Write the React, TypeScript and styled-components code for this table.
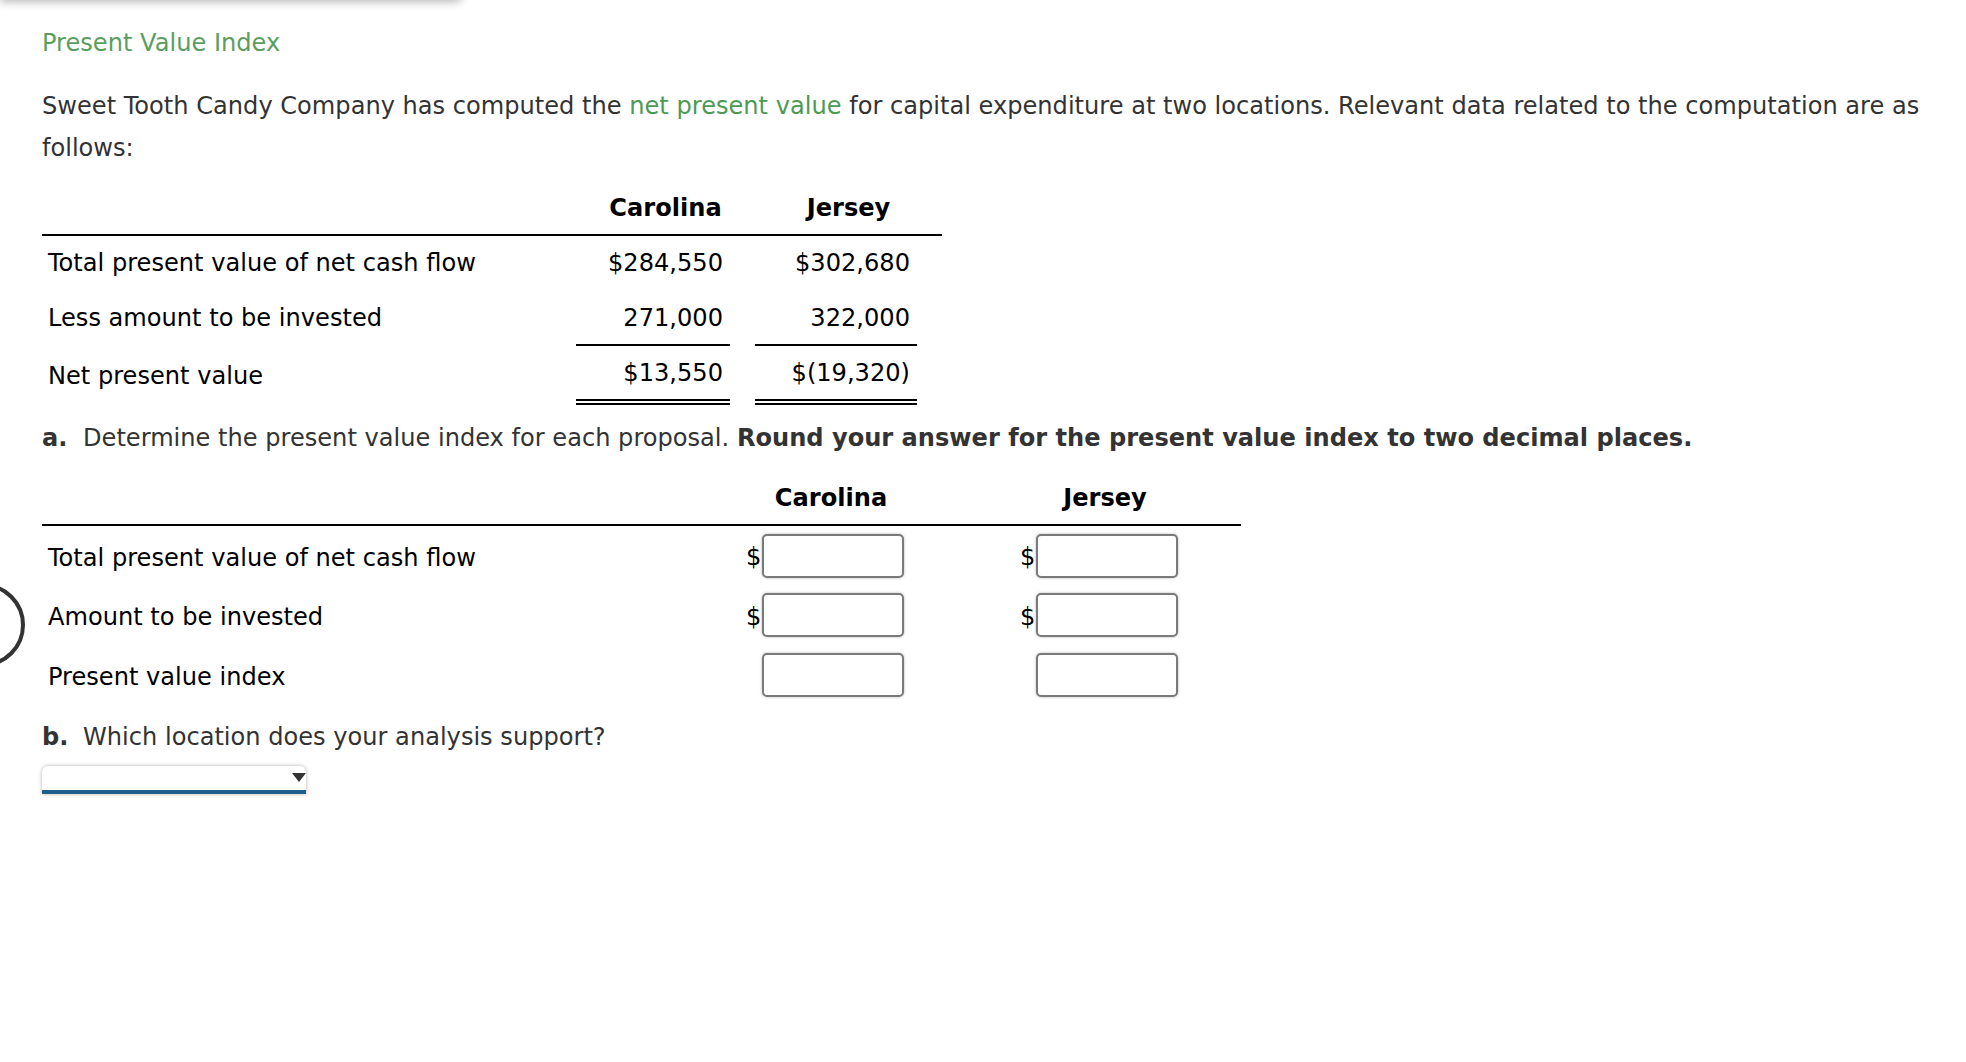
import styled, { createGlobalStyle } from 'styled-components';

type Amounts = { carolina: string; jersey: string; line?: 'single' | 'double' };

const givenRows: ({ label: string } & Amounts)[] = [
  { label: 'Total present value of net cash flow', carolina: '$284,550', jersey: '$302,680' },
  { label: 'Less amount to be invested', carolina: '271,000', jersey: '322,000', line: 'single' },
  { label: 'Net present value', carolina: '$13,550', jersey: '$(19,320)', line: 'double' },
];

const answerRows = [
  { label: 'Total present value of net cash flow', dollar: true },
  { label: 'Amount to be invested', dollar: true },
  { label: 'Present value index', dollar: false },
];

const App: React.FC = () => {
  return (
    <>
      <GlobalStyle />
      <Page>
        <TopShadow />
        <RoundButton />

        <Title>Present Value Index</Title>
        <Intro>
          Sweet Tooth Candy Company has computed the <Term>net present value</Term> for capital
          expenditure at two locations. Relevant data related to the computation are as follows:
        </Intro>

        {/* Given data */}
        <GivenTable>
          <HeadCell />
          <HeadCell>Carolina</HeadCell>
          <HeadCell>Jersey</HeadCell>
          {givenRows.map((row) => (
            <GivenRow key={row.label}>
              <LabelCell $last={row.line === 'double'}>{row.label}</LabelCell>
              <ValueCell>
                <Amount $line={row.line}>{row.carolina}</Amount>
              </ValueCell>
              <ValueCell>
                <Amount $line={row.line}>{row.jersey}</Amount>
              </ValueCell>
            </GivenRow>
          ))}
        </GivenTable>

        <Question>
          <Letter>a.</Letter>Determine the present value index for each proposal.{' '}
          <strong>Round your answer for the present value index to two decimal places.</strong>
        </Question>

        {/* Answer grid */}
        <AnswerTable>
          <AnswerHead>
            <span />
            <HeadText>Carolina</HeadText>
            <HeadText>Jersey</HeadText>
          </AnswerHead>
          {answerRows.map((row) => (
            <AnswerRow key={row.label}>
              <AnswerLabel>{row.label}</AnswerLabel>
              <InputCell>
                <Dollar>{row.dollar ? '$' : ''}</Dollar>
                <Field type="text" aria-label={`${row.label} Carolina`} />
              </InputCell>
              <InputCell>
                <Dollar>{row.dollar ? '$' : ''}</Dollar>
                <Field type="text" aria-label={`${row.label} Jersey`} />
              </InputCell>
            </AnswerRow>
          ))}
        </AnswerTable>

        <QuestionB>
          <Letter>b.</Letter>Which location does your analysis support?
        </QuestionB>
        <Select>
          <Caret />
        </Select>
      </Page>
    </>
  );
};

// Styles
const GlobalStyle = createGlobalStyle`
  body {
    margin: 0;
    background: #fff;
    font-family: "DejaVu Sans", Verdana, sans-serif;
  }
`;

const Page = styled.div`
  position: relative;
  box-sizing: border-box;
  min-height: 1062px;
  padding: 22px 30px 40px 42px;
  overflow: hidden;
  font-size: 24.1px;
  line-height: 42px;
  color: #333;
`;

const TopShadow = styled.div`
  position: absolute;
  top: -40px;
  left: 0;
  width: 462px;
  height: 40px;
  background: #fff;
  border-radius: 0 0 6px 0;
  box-shadow: 0 2px 9px rgba(0, 0, 0, 0.28);
`;

const RoundButton = styled.div`
  position: fixed;
  left: -59px;
  top: 583px;
  width: 84px;
  height: 84px;
  box-sizing: border-box;
  border: 4px solid #333;
  border-radius: 50%;
`;

const Title = styled.h1`
  margin: 0;
  font-size: inherit;
  font-weight: normal;
  color: #5a9e5f;
`;

const Intro = styled.p`
  margin: 21px 0 0;
`;

const Term = styled.span`
  color: #4d9a55;
`;

const GivenTable = styled.div`
  display: grid;
  grid-template-columns: 534px 179px 187px;
  width: 900px;
  margin-top: 18px;
  color: #000;
`;

const GivenRow = styled.div`
  display: contents;
`;

const HeadCell = styled.div`
  padding-bottom: 5px;
  border-bottom: 2px solid #000;
  font-weight: bold;
  text-align: center;
`;

const LabelCell = styled.div<{ $last?: boolean }>`
  padding: ${({ $last }) => ($last ? '9px' : '6px')} 0 0 6px;
`;

const ValueCell = styled.div`
  padding: 6px 25px 0 0;
`;

const Amount = styled.div<{ $line?: 'single' | 'double' }>`
  padding: 0 7px 5px 0;
  text-align: right;
  border-bottom: ${({ $line }) =>
    $line === 'double' ? '6px double #000' : $line === 'single' ? '2px solid #000' : '2px solid transparent'};
`;

const Question = styled.p`
  margin: 12px 0 0;
`;

const QuestionB = styled(Question)`
  margin-top: 11px;
`;

const Letter = styled.b`
  display: inline-block;
  width: 41px;
`;

const AnswerTable = styled.div`
  width: 1199px;
  margin-top: 18px;
  color: #000;
`;

const AnswerRow = styled.div`
  display: grid;
  grid-template-columns: 606px 182px 182px;
  column-gap: 92px;
  align-items: center;
  height: 59.5px;
  box-sizing: border-box;
  padding: 0 45px 0 0;
`;

const AnswerHead = styled(AnswerRow)`
  height: auto;
  padding: 0 45px 5px 0;
  border-bottom: 2px solid #000;
`;

const HeadText = styled.div`
  font-weight: bold;
  text-align: center;
`;

const AnswerLabel = styled.div`
  padding: 4px 0 0 6px;
`;

const InputCell = styled.div`
  display: flex;
  align-items: center;
  height: 44px;
  padding-left: 6px;
`;

const Dollar = styled.span`
  width: 16px;
  line-height: 1;
  padding-top: 3px;
`;

const Field = styled.input`
  width: 142px;
  height: 44px;
  box-sizing: border-box;
  margin: 0;
  border: 2px solid #7a7a7a;
  border-radius: 5px;
  background: #fff;
  box-shadow: 0 0 3px rgba(0, 0, 0, 0.28);
  outline: none;
`;

const Select = styled.div`
  display: flex;
  align-items: flex-start;
  justify-content: flex-end;
  width: 264px;
  height: 28px;
  box-sizing: border-box;
  margin-top: 8px;
  padding-top: 7px;
  background: #fff;
  border-bottom: 4px solid #1f5e8b;
  border-radius: 6px 6px 0 0;
  box-shadow: 0 0 4px rgba(0, 0, 0, 0.3);
`;

const Caret = styled.span`
  width: 0;
  height: 0;
  border-left: 7px solid transparent;
  border-right: 7px solid transparent;
  border-top: 9px solid #333;
`;

export default App;
